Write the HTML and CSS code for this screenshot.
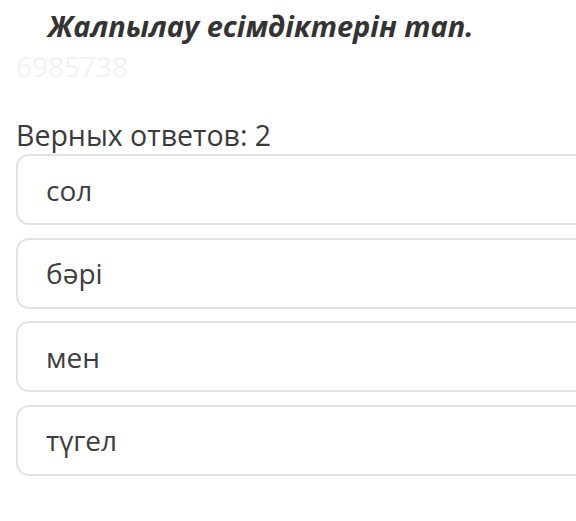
FILE: index.html
```html
<!DOCTYPE html>
<html>
<head>
<meta charset="utf-8">
<link rel="stylesheet" href="styles.css">
</head>
<body>
<div class="page">
  <h1 class="title">Жалпылау есімдіктерін тап.</h1>
  <div class="qid">6985738</div>
  <div class="count">Верных ответов: 2</div>
  <div class="options">
    <div class="option">сол</div>
    <div class="option">бәрі</div>
    <div class="option">мен</div>
    <div class="option">түгел</div>
  </div>
</div>
</body>
</html>
```
FILE: styles.css
```css
html, body {
  margin: 0;
  padding: 0;
  background: #ffffff;
  overflow: hidden;
}
.page {
  font-family: "Open Sans", "Noto Sans", sans-serif;
  color: #3a3a3a;
  padding: 6px 0 0 16px;
  width: 620px;
}
.title {
  margin: 0 0 0 32px;
  font-size: 29px;
  font-weight: 700;
  font-style: italic;
  line-height: 40px;
  color: #333333;
}
.qid {
  font-size: 28px;
  line-height: 36px;
  color: #f2f2f2;
  margin-top: 2px;
}
.count {
  font-size: 28.5px;
  line-height: 36px;
  margin-top: 33px;
  color: #3a3a3a;
}
.options {
  display: flex;
  flex-direction: column;
  gap: 12.5px;
  margin-top: 1px;
}
.option {
  height: 67px;
  border: 2px solid #e3e3e3;
  border-radius: 13px;
  box-sizing: content-box;
  padding-left: 28px;
  display: flex;
  align-items: center;
  font-size: 28px;
  color: #3e3e3e;
}
```
